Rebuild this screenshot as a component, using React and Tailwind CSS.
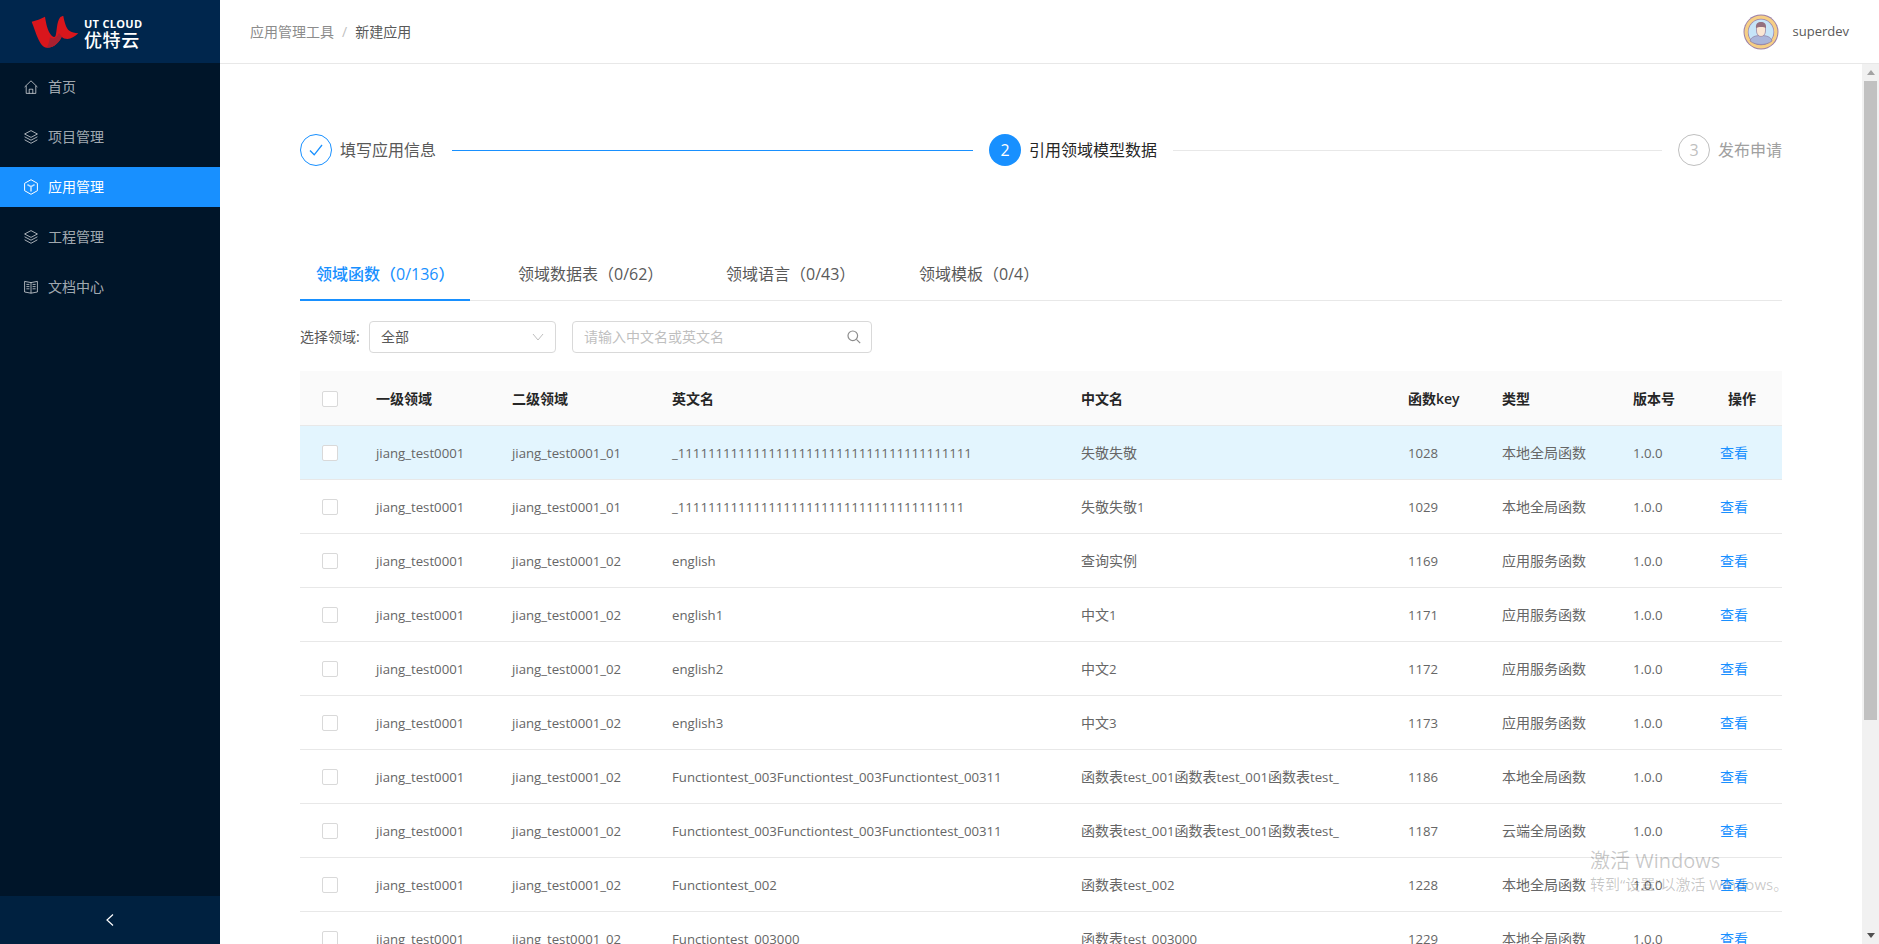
import React from "react";

const rows = [
  ["jiang_test0001", "jiang_test0001_01", "_111111111111111111111111111111111111111", "失敬失敬", "1028", "本地全局函数"],
  ["jiang_test0001", "jiang_test0001_01", "_11111111111111111111111111111111111111", "失敬失敬1", "1029", "本地全局函数"],
  ["jiang_test0001", "jiang_test0001_02", "english", "查询实例", "1169", "应用服务函数"],
  ["jiang_test0001", "jiang_test0001_02", "english1", "中文1", "1171", "应用服务函数"],
  ["jiang_test0001", "jiang_test0001_02", "english2", "中文2", "1172", "应用服务函数"],
  ["jiang_test0001", "jiang_test0001_02", "english3", "中文3", "1173", "应用服务函数"],
  ["jiang_test0001", "jiang_test0001_02", "Functiontest_003Functiontest_003Functiontest_00311", "函数表test_001函数表test_001函数表test_", "1186", "本地全局函数"],
  ["jiang_test0001", "jiang_test0001_02", "Functiontest_003Functiontest_003Functiontest_00311", "函数表test_001函数表test_001函数表test_", "1187", "云端全局函数"],
  ["jiang_test0001", "jiang_test0001_02", "Functiontest_002", "函数表test_002", "1228", "本地全局函数"],
  ["jiang_test0001", "jiang_test0001_02", "Functiontest_003000", "函数表test_003000", "1229", "本地全局函数"],
];

const HomeIcon = () => (
  <svg width="14" height="14" viewBox="0 0 14 14" fill="none" stroke="currentColor" strokeWidth="1">
    <path d="M0.6 7 L7 0.8 L13.4 7 M2.2 5.8 V13.4 H11.8 V5.8 M5.2 13.4 V9.2 H8.8 V13.4" />
  </svg>
);

const LayersIcon = () => (
  <svg width="14" height="14" viewBox="0 0 14 14" fill="none" stroke="currentColor" strokeWidth="1">
    <path d="M7 0.6 L13.4 4 L7 7.4 L0.6 4 Z" />
    <path d="M0.6 6.8 L7 10.2 L13.4 6.8" />
    <path d="M0.6 9.8 L7 13.3 L13.4 9.8" />
  </svg>
);

const CubeIcon = () => (
  <svg width="14" height="16" viewBox="0 0 14 16" fill="none" stroke="currentColor" strokeWidth="1">
    <path d="M7 0.7 L13.4 4.3 V11.7 L7 15.3 L0.6 11.7 V4.3 Z" />
    <path d="M3.4 5.6 L7 7.6 L10.6 5.6 M7 7.6 V12.4" strokeWidth="1.6" opacity="0.75" />
  </svg>
);

const BookIcon = () => (
  <svg width="14" height="14" viewBox="0 0 14 14" fill="none" stroke="currentColor" strokeWidth="1">
    <path d="M0.6 1.4 L7 2.6 L13.4 1.4 V12 L7 13.2 L0.6 12 Z M7 2.6 V13.2" />
    <path d="M2.4 4.4 H5.4 M2.4 6.6 H5.4 M2.4 8.8 H5.4 M8.6 4.4 H11.6 M8.6 6.6 H11.6 M8.6 8.8 H11.6" />
  </svg>
);

const menu = [
  { label: "首页", icon: <HomeIcon /> },
  { label: "项目管理", icon: <LayersIcon /> },
  { label: "应用管理", icon: <CubeIcon />, active: true },
  { label: "工程管理", icon: <LayersIcon /> },
  { label: "文档中心", icon: <BookIcon /> },
];

const Logo = () => (
  <svg width="48" height="34" viewBox="31 15 48 34">
    <path
      d="M31.7 21.7 C36 20.5 41 19 45 16.7 C46 23 47.5 30 50 33.5 C52 37 54.5 38 55.5 36 C57 32 56.5 22 60 17.5 C61 16.5 62.5 16 63.3 16 C64.5 22 66 28 69 30.5 C71.5 32.5 75 33 78.3 33.3 C75 36.5 71 39 67.5 39 C65 39 63 38 61.7 36.7 C60 41 55 47.7 46.7 47.7 C40 47.7 36 33 31.7 21.7 Z"
      fill="#d9161c"
    />
    <path d="M50 37 C53 40 57 38 59 33 L61.7 36.7 C60 41 55 47.7 46.7 47.7 C48.5 45 49.5 41 50 37 Z" fill="#a92030" />
  </svg>
);

const Avatar = () => (
  <svg width="36" height="36" viewBox="0 0 36 36">
    <circle cx="18" cy="18" r="17.5" fill="#9b7fa8" />
    <circle cx="18" cy="18" r="16.5" fill="#f6cf85" />
    <circle cx="18" cy="18" r="13.2" fill="#9b7fa8" />
    <circle cx="18" cy="18" r="12.5" fill="#c6e4f8" />
    <path d="M7 27 C8 23 12 21.5 18 21.5 C24 21.5 28 23 29 27 C26 29.5 22 30.5 18 30.5 C14 30.5 10 29.5 7 27 Z" fill="#aab5da" stroke="#8e7a9e" strokeWidth="0.7" />
    <path d="M13.5 12 H22.5 V17 C22.5 20 20.5 22.5 18 22.5 C15.5 22.5 13.5 20 13.5 17 Z" fill="#fbe6d3" stroke="#8e7a9e" strokeWidth="0.7" />
    <path d="M13 14 C12.5 9.5 15 8 18 8 C21 8 23.5 9.5 23 14 C21.5 12.5 15 12.5 13 14 Z" fill="#94707f" />
  </svg>
);

const Checkbox = () => (
  <span className="block w-4 h-4 bg-white border border-[#d9d9d9] rounded-[2px]" />
);

// latin parts of a mixed cell run a bit smaller than the chinese ones
const Mixed = ({ text }) =>
  text.split(/([\x00-\x7f]+)/).map((part, i) =>
    /^[\x00-\x7f]+$/.test(part) ? (
      <span key={i} className="text-[13.2px]">{part}</span>
    ) : (
      part
    )
  );

const App = () => {
  return (
    <div className="relative flex w-full h-screen overflow-hidden bg-white text-sm text-[#595959] [font-family:'Open_Sans','Noto_Sans_CJK_SC',sans-serif]">
      {/* Sidebar */}
      <aside className="flex flex-col w-[220px] shrink-0 bg-[#001529]">
        <div className="flex items-center h-[63px] pl-[31px] bg-[#00264d]">
          <Logo />
          <div className="ml-[5px] text-white">
            <div className="text-[11px] leading-[13px] font-bold tracking-[0.3px] mt-[3px]">UT CLOUD</div>
            <div className="text-[18px] leading-[20px] font-medium tracking-[0.6px]">优特云</div>
          </div>
        </div>
        <nav className="flex-1 pt-1">
          {menu.map((item) => (
            <div
              key={item.label}
              className={`flex items-center h-10 mb-[10px] pl-6 ${item.active ? "bg-[#1890ff] text-white" : "text-[#ffffffa6]"}`}
            >
              <span className="flex items-center justify-center w-[14px] h-4">{item.icon}</span>
              <span className="ml-[10px]">{item.label}</span>
            </div>
          ))}
        </nav>
        <div className="flex items-center justify-center h-12 bg-[#002140] text-white">
          <svg width="10" height="12" viewBox="0 0 10 12" fill="none" stroke="currentColor" strokeWidth="1.2">
            <path d="M8 0.5 L2 6 L8 11.5" />
          </svg>
        </div>
      </aside>

      <div className="flex flex-col flex-1 min-w-0">
        {/* Header */}
        <header className="flex items-center h-16 shrink-0 pl-[30px] pr-[30px] border-b border-[#e8e8e8]">
          <span className="text-[#8c8c8c]">应用管理工具</span>
          <span className="mx-2 text-[#bfbfbf]">/</span>
          <span>新建应用</span>
          <div className="ml-auto flex items-center">
            <Avatar />
            <span className="ml-[14px] text-[13px]">superdev</span>
          </div>
        </header>

        <div className="flex flex-1 min-h-0">
          {/* Content */}
          <main className="flex-1 min-w-0 overflow-hidden px-20 pt-[70px]">
            <div className="flex items-center h-8 text-base">
              <span className="flex items-center justify-center w-8 h-8 rounded-full border border-[#1890ff] text-[#1890ff]">
                <svg width="16" height="14" viewBox="0 0 16 14" fill="none" stroke="currentColor" strokeWidth="1.3">
                  <path d="M2 7.5 L6.2 11.8 L14 2" />
                </svg>
              </span>
              <span className="ml-2">填写应用信息</span>
              <span className="w-[521px] h-px mx-4 bg-[#1890ff]" />
              <span className="flex items-center justify-center w-8 h-8 rounded-full bg-[#1890ff] text-white">2</span>
              <span className="ml-2 text-[#262626]">引用领域模型数据</span>
              <span className="flex-1 h-px mx-4 bg-[#e8e8e8]" />
              <span className="flex items-center justify-center w-8 h-8 rounded-full border border-[#bfbfbf] text-[#bfbfbf]">3</span>
              <span className="ml-2 text-[#a0a0a0]">发布申请</span>
            </div>

            {/* Tabs */}
            <div className="flex h-[53px] mt-[82px] text-base border-b border-[#e8e8e8]">
              <div className="w-[170px] h-[53px] pl-4 pt-[14px] mr-8 border-b-2 border-[#1890ff] text-[#1890ff] font-medium">领域函数（0/136）</div>
              <div className="w-[176px] pl-4 pt-[14px] mr-8">领域数据表（0/62）</div>
              <div className="w-[161px] pl-4 pt-[14px] mr-8">领域语言（0/43）</div>
              <div className="pl-4 pt-[14px]">领域模板（0/4）</div>
            </div>

            {/* Filters */}
            <div className="flex items-center mt-5">
              <span className="w-[69px]">选择领域:</span>
              <div className="flex items-center justify-between w-[187px] h-8 pl-[11px] pr-[11px] border border-[#d9d9d9] rounded">
                <span>全部</span>
                <svg width="12" height="8" viewBox="0 0 12 8" fill="none" stroke="#bfbfbf" strokeWidth="1">
                  <path d="M1 1 L6 7 L11 1" />
                </svg>
              </div>
              <div className="flex items-center justify-between w-[300px] h-8 ml-4 pl-[11px] pr-[10px] border border-[#d9d9d9] rounded">
                <span className="text-[#bfbfbf]">请输入中文名或英文名</span>
                <svg width="14" height="14" viewBox="0 0 14 14" fill="none" stroke="#8c8c8c" strokeWidth="1.2">
                  <circle cx="5.8" cy="5.8" r="4.8" />
                  <path d="M9.4 9.4 L13.2 13.2" />
                </svg>
              </div>
            </div>

            {/* Table */}
            <table className="w-full mt-[18px] table-fixed">
              <colgroup>
                <col className="w-[60px]" />
                <col className="w-[136px]" />
                <col className="w-[160px]" />
                <col className="w-[409px]" />
                <col className="w-[327px]" />
                <col className="w-[94px]" />
                <col className="w-[131px]" />
                <col className="w-[87px]" />
                <col className="w-[78px]" />
              </colgroup>
              <thead>
                <tr className="h-[54px] bg-[#fafafa] border-b border-[#e8e8e8] text-[#262626] text-left">
                  <th className="pl-[22px] pt-[2px]"><Checkbox /></th>
                  <th className="pl-4 pt-[2px] font-semibold">一级领域</th>
                  <th className="pl-4 pt-[2px] font-semibold">二级领域</th>
                  <th className="pl-4 pt-[2px] font-semibold">英文名</th>
                  <th className="pl-4 pt-[2px] font-semibold">中文名</th>
                  <th className="pl-4 pt-[2px] font-semibold">函数key</th>
                  <th className="pl-4 pt-[2px] font-semibold">类型</th>
                  <th className="pl-4 pt-[2px] font-semibold">版本号</th>
                  <th className="pl-6 pt-[2px] font-semibold">操作</th>
                </tr>
              </thead>
              <tbody className="text-[#666666]">
                {rows.map((r, i) => (
                  <tr key={r[4]} className={`h-[54px] border-b border-[#e8e8e8] ${i === 0 ? "bg-[#e3f5fe]" : ""}`}>
                    <td className="pl-[22px] pt-[2px]"><Checkbox /></td>
                    <td className="pl-4 pt-[2px] text-[13.2px]">{r[0]}</td>
                    <td className="pl-4 pt-[2px] text-[13.2px]">{r[1]}</td>
                    <td className="pl-4 pt-[2px] text-[13.2px] whitespace-nowrap overflow-hidden">{r[2]}</td>
                    <td className="pl-4 pt-[2px] whitespace-nowrap overflow-hidden"><Mixed text={r[3]} /></td>
                    <td className="pl-4 pt-[2px] text-[13.2px]">{r[4]}</td>
                    <td className="pl-4 pt-[2px]">{r[5]}</td>
                    <td className="pl-4 pt-[2px] text-[13.2px]">1.0.0</td>
                    <td className="pl-4 pt-[2px] text-[#1890ff]">查看</td>
                  </tr>
                ))}
              </tbody>
            </table>
          </main>

          {/* Scrollbar */}
          <div className="flex flex-col items-center w-[17px] shrink-0 bg-[#f1f1f1]">
            <div className="flex items-center justify-center h-[17px]">
              <svg width="8" height="5" viewBox="0 0 8 5"><path d="M4 0 L8 5 H0 Z" fill="#a3a3a3" /></svg>
            </div>
            <div className="w-[13px] h-[639px] bg-[#c1c1c1]" />
            <div className="flex items-center justify-center h-[17px] mt-auto">
              <svg width="8" height="5" viewBox="0 0 8 5"><path d="M0 0 H8 L4 5 Z" fill="#505050" /></svg>
            </div>
          </div>
        </div>
      </div>

      {/* Windows activation watermark */}
      <div className="absolute left-[1590px] top-[848px] pointer-events-none whitespace-nowrap text-[#00000038]">
        <div className="text-[20px] leading-[26px]">激活 Windows</div>
        <div className="text-[15px] leading-5">转到“设置”以激活 Windows。</div>
      </div>
    </div>
  );
};

export default App;
